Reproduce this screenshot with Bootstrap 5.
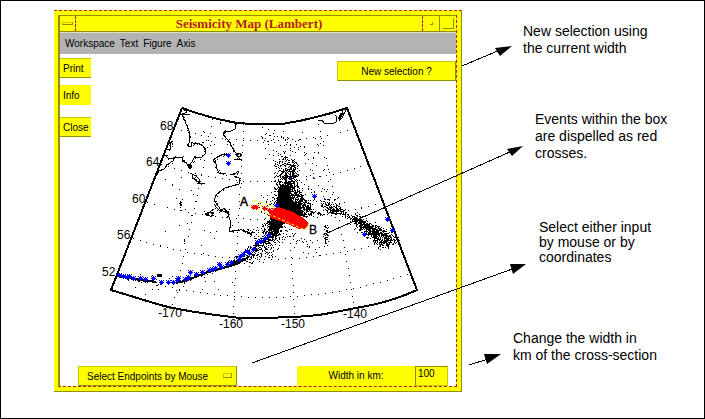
<!DOCTYPE html>
<html lang="en">
<head>
<meta charset="utf-8">
<meta name="viewport" content="width=device-width, initial-scale=1">
<title>Seismicity Map (Lambert)</title>
<link href="https://cdn.jsdelivr.net/npm/bootstrap@5.3.0/dist/css/bootstrap.min.css" rel="stylesheet">
<style>
  :root { --y: #ffff00; --olive: #909000; --brick: #b22222; --ui: "Liberation Sans", Arial, sans-serif; }
  body { font-family: var(--ui); color: #000; background: #fff; }
  .figure-frame { border: 1px solid #000; padding: 9px 0 26px 53px; }
  .app-window { flex: 1 1 0; min-width: 0; background: var(--y); border-top: 1px dashed var(--brick);
    border-right: 1px solid var(--olive); border-bottom: 1px solid var(--olive); padding: 4px; }
  .app-inner { border-left: 2px solid var(--olive); border-right: 1px dashed var(--brick);
    border-bottom: 1px dashed var(--brick); }
  .title-bar { height: 17px; border-top: 1px solid var(--olive); border-bottom: 1px solid var(--olive); }
  .title-bar h1 { font: bold 13px/15px "Liberation Serif", "Times New Roman", serif; color: var(--brick); }
  .win-btn { background: var(--y); border: 0; width: 16px; height: 15px; }
  .win-btn.menu-box { border-right: 1px dashed var(--brick); }
  .win-btn.min-box { border-left: 1px dashed var(--brick); border-right: 1px solid var(--olive); width: 18px; }
  .menu-strip { background: #b3b3b3; height: 22px; border-top: 1px solid #e0e0b0; padding-left: 5px; gap: 5px; }
  .menu-strip a { font: 10px/21px var(--ui); color: #000; text-decoration: none; }
  .app-body { background: #fff; }
  .ctl { background: var(--y); color: #000; font: 10px/13px var(--ui); height: 20px; border: 1px solid;
    border-color: #c8c800 var(--olive) var(--olive) #c8c800; border-radius: 0; padding: 0; }
  .side-col { width: 31px; padding-top: 4px; }
  .side-col .ctl { border-left: 0; border-right: 0; text-align: left; padding-left: 3px; }
  .side-col .ctl:nth-child(1) { margin-bottom: 7px; }
  .side-col .ctl:nth-child(2) { margin-bottom: 12px; border-color: var(--y); }
  .new-btn { width: 119px; margin-top: 7px; }
  .map { min-height: 0; aspect-ratio: 365 / 285; }
  .map text { font: 12px var(--ui); }
  .bottom-row { padding: 0 8px 0 18px; }
  .pick { position: relative; flex: 0 0 159px; }
  .pick select { appearance: none; width: 100%; padding-left: 8px; display: block; }
  .pick svg { position: absolute; right: 5px; top: 7px; pointer-events: none; }
  .width-label { background: var(--y); width: 118px; height: 20px; font: 10px/20px var(--ui); }
  .width-input { width: 33px; border-color: var(--olive) #c8c800 #c8c800 var(--olive); padding: 0 0 5px 2px; }
  .notes { flex: 0 1 242px; min-width: 0; padding: 13px 0 0 51px; font-size: 14px; line-height: 17px; }
  .notes p { margin: 0; white-space: nowrap; }
  .n1 { padding-left: 10px; } .n2 { padding: 54px 0 0 22px; }
  .n3 { padding: 58px 0 0 26px; line-height: 15px; } .n4 { padding-top: 65px; }
  .arrows { position: absolute; left: 0; top: 0; width: 100%; height: 100%; pointer-events: none; }
</style>
<script src="https://cdn.jsdelivr.net/npm/bootstrap@5.3.0/dist/js/bootstrap.bundle.min.js"></script>
</head>
<body>
<main class="figure-frame position-relative d-flex align-items-stretch min-vh-100">
  <section class="app-window d-flex flex-column">
    <div class="app-inner d-flex flex-column flex-grow-1">
      <header class="title-bar d-flex align-items-center">
        <button class="win-btn menu-box p-0 d-flex align-items-center justify-content-center" type="button" aria-label="Window menu">
          <svg width="11" height="3" shape-rendering="crispEdges"><path d="M0 .5H10M.5 0V3" stroke="#c8c800"/><path d="M0 2.5H11M10.5 0V3" stroke="#909000"/></svg>
        </button>
        <h1 class="flex-grow-1 text-center m-0">Seismicity Map (Lambert)</h1>
        <button class="win-btn min-box p-0 d-flex align-items-center justify-content-center" type="button" aria-label="Minimize">
          <svg width="3" height="3" shape-rendering="crispEdges"><path d="M0 2.5H3M2.5 0V3" stroke="#909000"/></svg>
        </button>
        <button class="win-btn p-0 d-flex align-items-center justify-content-center" type="button" aria-label="Maximize">
          <svg width="11" height="11" shape-rendering="crispEdges"><path d="M0 10.5H11M10.5 0V11" stroke="#909000"/></svg>
        </button>
      </header>
      <nav class="menu-strip d-flex" aria-label="Figure menu">
        <a href="#">Workspace</a><a href="#">Text</a><a href="#">Figure</a><a href="#">Axis</a>
      </nav>
      <div class="app-body d-flex flex-column flex-grow-1">
        <div class="d-flex flex-grow-1">
          <div class="side-col d-flex flex-column flex-shrink-0">
            <button class="ctl" type="button">Print</button>
            <button class="ctl" type="button">Info</button>
            <button class="ctl" type="button">Close</button>
          </div>
          <div class="d-flex flex-column flex-grow-1">
            <button class="ctl new-btn align-self-end" type="button">New selection ?</button>
            <svg class="map w-100 flex-grow-1" viewBox="91 81 365 285" role="img" aria-label="Lambert map of earthquake epicentres">
              <g fill="none" stroke="#000" shape-rendering="crispEdges">
                <g stroke-dasharray="1 6">
                  <path d="M213 119Q194 215 172 308M244 124L233 318M283 124L295 317M317 117Q340 215 355 309"/>
                  <path d="M174 129Q265 153 355 129M161 164Q265 200 369 164M147 202Q265 237 384 202M133 238Q265 281 398 238M118 273Q265 322 411 273"/>
                </g>
                <path class="coast" d="M182 113L184 119 187 126 189 131 190 138 189 143 188 146 191 147 192 142 194 144 199 143 204 147 206 153 202 157 197 158 195 156 192 162 188 166 190 168 186 163 182 160 183 157 177 157 173 158 168 158 165 155M176 156L173 161 168 164 164 169 159 171 157 175M167 149L170 150 171 142 168 145 173 141"/>
                <path class="coast" d="M236 124L235 129 231 131 225 131 223 134 226 138 229 141 231 145 233 149 236 153 238 157 242 155 239 153 237 156 240 159 234 159M229 155L224 154 219 156 213 160 216 164 217 169 219 173 226 174M230 174L234 174 239 171M234 176L239 178 239 184 232 186 225 188 221 191 217 194 214 200 217 204 220 209 223 211 228 211 229 216 226 218M218 203L215 206 221 212 224 208 227 212M229 217L231 223 229 231 232 232 235 230 239 231 241 229 244 232 247 231 250 234 254 232"/>
                <path class="coast" d="M192 174L196 176 200 180 198 183 204 183 201 184 197 181 193 178ZM205 214L210 212 214 212 211 217 208 214ZM180 201L180 205 182 206M185 242L184 239M210 212L214 209"/>
                <path d="M182 108L187 112 183 114 190 114M347 108L345 112 341 116 339 121 342 118 346 110M340 117L343 111M318 120L322 120 324 123 332 124 336 122 337 117 335 115"/>
                <path stroke-width="3" d="M188 166H192M342 113L339 119M232 263L240 261M157 276L162 275"/>
                <path stroke-width="2" d="M182 108Q209 118 237 123Q265 125 282 124Q302 121 320 116Q333 113 347 108L385 207L417 290Q395 300 372 305Q345 310 325 314Q302 318 240 318Q180 311 157 304L111 290L182 108"/>
                <path stroke-width="2" d="M117 276L140 280 156 282M176 283L188 280 205 273 220 269 237 264 250 256"/>
              </g>
              <path d="M279 187L283 184 286 186 289 184 291 190 290 198 294 202 300 205 302 212 306 217 290 214 276 209 277 200ZM271 217L286 222 280 227 277 235 270 227Z" shape-rendering="crispEdges"/>
              <g id="quakes" shape-rendering="crispEdges"></g>
              <path fill="#f00" d="M269 214L274 208 278 207 291 211 302 217 309 223 308 226 304 229 299 229 290 225 280 221 270 218Z" shape-rendering="crispEdges"/>
              <path fill="none" stroke="#ff0" stroke-dasharray="3 2" d="M254 200L277 208M309 223L305 230L251 206L254 200M256 204L268 207"/>
              <g id="stars" fill="none" shape-rendering="crispEdges"></g>
              <text x="160" y="130">68</text><text x="146" y="166">64</text><text x="132" y="203">60</text>
              <text x="117" y="239">56</text><text x="102" y="276">52</text>
              <text x="158" y="317">-170</text><text x="219" y="328">-160</text><text x="281" y="328">-150</text><text x="343" y="318">-140</text>
              <text x="240" y="206" stroke="#000" stroke-width=".5">A</text><text x="309" y="234" stroke="#000" stroke-width=".3">B</text>
            </svg>
          </div>
        </div>
        <div class="bottom-row d-flex align-items-end justify-content-between">
          <div class="pick">
            <select class="ctl" aria-label="Endpoint selection">
              <option>Select Endpoints by Mouse</option>
              <option>Select Endpoints by Coordinates</option>
            </select>
            <svg width="9" height="5" shape-rendering="crispEdges"><path d="M0 .5H9M.5 0V5" stroke="#c8c800"/><path d="M0 4.5H9M8.5 0V5" stroke="#909000"/></svg>
          </div>
          <div class="d-flex">
            <label class="width-label text-center" for="width-km">Width in km:</label>
            <input class="ctl width-input" id="width-km" type="text" value="100">
          </div>
        </div>
      </div>
    </div>
  </section>
  <aside class="notes">
    <p class="n1">New selection using<br>the current width</p>
    <p class="n2">Events within the box<br>are dispelled as red<br>crosses.</p>
    <p class="n3">Select either input<br>by mouse or by<br>coordinates</p>
    <p class="n4">Change the width in<br>km of the cross-section</p>
  </aside>
  <svg class="arrows" viewBox="1 1 703 417" preserveAspectRatio="none" aria-hidden="true">
    <path fill="none" stroke="#000" shape-rendering="crispEdges" d="M462 66L500 50M325 234L512 151M252 363L515 268M469 365L488 359"/>
    <path d="M512 46L495 48 500 56ZM523 146L507 149 512 156ZM526 264L510 264 513 274ZM501 354L484 354 487 364Z"/>
  </svg>
</main>
<script>
  // Seeded generator, so that the epicentre cloud is the same on each load.
  let seed = 7;
  const rnd = () => (seed = (seed * 16807) % 2147483647) / 2147483647;
  const spread = () => rnd() + rnd() - 1;
  const dot = (x, y) => `M${Math.round(x)} ${Math.round(y)}h1v1h-1z`;

  // Each cloud: start x, y, end x, y, half-width, number of events
  const clouds = [
    [284, 158, 286, 190, 14, 280], [292, 162, 290, 186, 8, 170], [283, 184, 282, 212, 11, 450],
    [291, 188, 304, 212, 11, 400], [276, 218, 268, 240, 10, 300], [279, 212, 272, 232, 11, 250],
    [272, 225, 266, 256, 16, 150], [262, 246, 245, 262, 9, 90], [267, 238, 230, 264, 5, 150],
    [305, 205, 313, 214, 8, 60], [324, 202, 334, 212, 7, 110], [334, 206, 343, 213, 7, 70],
    [309, 213, 325, 214, 2, 18], [325, 225, 326, 243, 3, 45], [340, 211, 360, 224, 4, 40],
    [353, 216, 365, 228, 8, 140], [362, 223, 385, 245, 8, 400], [370, 226, 394, 241, 8, 240],
    [230, 264, 180, 282, 3, 80], [155, 282, 117, 276, 4, 50], [265, 135, 302, 155, 22, 60],
    [305, 140, 320, 180, 25, 35], [262, 195, 270, 220, 10, 30], [247, 228, 260, 240, 7, 30],
    [280, 230, 320, 250, 12, 40], [130, 285, 230, 280, 16, 25], [300, 190, 340, 200, 16, 30],
    [205, 130, 220, 150, 18, 16], [175, 175, 200, 250, 30, 22]
  ];
  let d = "";
  for (const [x1, y1, x2, y2, r, n] of clouds)
    for (let i = 0; i < n; i++) {
      const t = rnd();
      d += dot(x1 + (x2 - x1) * t + spread() * r, y1 + (y2 - y1) * t + spread() * r * 0.8);
    }
  // Rough edge along the coastlines
  for (const p of document.querySelectorAll(".coast"))
    for (let s = 0, len = p.getTotalLength(); s < len; s += 1.5) {
      const q = p.getPointAtLength(s);
      if (rnd() < .6) d += dot(q.x + spread() * 2, q.y + spread() * 2);
    }
  document.getElementById("quakes").innerHTML = `<path d="${d}"/>`;

  const star = ([x, y]) => `M${x - 2} ${y + .5}h5M${x + .5} ${y - 2}v5M${x - 1.5} ${y - 1.5}l4 4m0-4l-4 4`;
  const blue = [[119,275],[123,276],[127,277],[129,276],[133,278],[140,278],[145,279],[153,278],[161,282],[168,282],
    [173,282],[177,280],[178,278],[185,279],[188,277],[190,272],[196,274],[202,272],[209,270],[212,269],[215,268],
    [219,264],[221,267],[227,264],[231,262],[239,259],[240,256],[243,254],[247,251],[249,253],[253,249],[257,242],[261,241],
    [265,238],[268,235],[228,155],[228,163],[314,196],[276,205],[387,219],[392,230],[364,234]];
  const red = [[253,207],[256,207],[264,208],[269,210],[305,225]];
  document.getElementById("stars").innerHTML =
    `<path stroke="#00f" d="${blue.map(star).join("")}M324 198v2m1 2v2m-36-26h2m22 0h2"/>` +
    `<path stroke="#f00" d="${red.map(star).join("")}"/>`;
</script>
</body>
</html>
